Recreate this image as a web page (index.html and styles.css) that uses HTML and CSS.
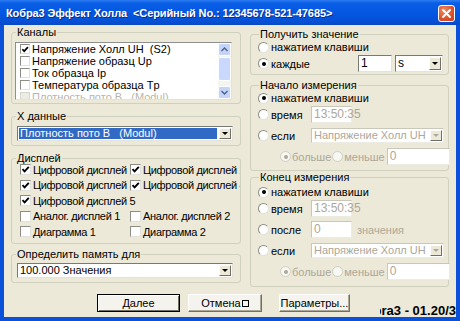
FILE: index.html
```html
<!DOCTYPE html>
<html lang="ru">
  <head>
    <meta charset="UTF-8" />
    <title>Кобра3 Эффект Холла</title>
    <link rel="stylesheet" href="styles.css">
  </head>
  <body>
    <div class="window">

      <div class="titlebar">
        <span class="title">Кобра3 Эффект Холла  &lt;Серийный No.: 12345678-521-47685&gt;</span>
        <span class="close">
          <svg width="9" height="9" viewBox="0 0 9 9"><path d="M1 1L8 8M8 1L1 8" stroke="#fff" stroke-width="1.8" stroke-linecap="round"/></svg>
        </span>
      </div>

      <div class="client">
        <div class="columns">

          <!-- left side -->
          <div class="col-left">
            <fieldset class="group channels">
              <legend>Каналы</legend>
              <div class="listbox">
                <div class="list-items">
                  <div class="list-row"><span class="cb small on"><svg viewBox="0 0 9 9"><path d="M1.5 4.2L3.6 6.4L7.8 1.8" /></svg></span>Напряжение Холл UH  (S2)</div>
                  <div class="list-row"><span class="cb small"></span>Напряжение образц Up</div>
                  <div class="list-row"><span class="cb small"></span>Ток образца Ip</div>
                  <div class="list-row"><span class="cb small"></span>Температура образца Tp</div>
                  <div class="list-row dim"><span class="cb small off"></span>Плотность пото В   (Modul)</div>
                </div>
                <div class="vscroll">
                  <span class="sbtn"><svg width="7" height="5" viewBox="0 0 7 5"><path d="M0.5 4L3.5 1L6.5 4" /></svg></span>
                  <span class="sthumb"></span>
                  <span class="strack"></span>
                  <span class="sbtn"><svg width="7" height="5" viewBox="0 0 7 5"><path d="M0.5 1L3.5 4L6.5 1" /></svg></span>
                </div>
              </div>
            </fieldset>

            <fieldset class="group xdata">
              <legend>Х данные</legend>
              <div class="combo wide">
                <span class="value selected">Плотность пото В   (Modul)</span>
                <span class="arrow"></span>
              </div>
            </fieldset>

            <fieldset class="group displays">
              <legend>Дисплей</legend>
              <div class="display-grid">
                <label class="opt"><span class="cb on"><svg viewBox="0 0 9 9"><path d="M1.5 4.2L3.6 6.4L7.8 1.8" /></svg></span>Цифровой дисплей 1</label>
                <label class="opt"><span class="cb on"><svg viewBox="0 0 9 9"><path d="M1.5 4.2L3.6 6.4L7.8 1.8" /></svg></span>Цифровой дисплей 2</label>
                <label class="opt"><span class="cb on"><svg viewBox="0 0 9 9"><path d="M1.5 4.2L3.6 6.4L7.8 1.8" /></svg></span>Цифровой дисплей 3</label>
                <label class="opt"><span class="cb on"><svg viewBox="0 0 9 9"><path d="M1.5 4.2L3.6 6.4L7.8 1.8" /></svg></span>Цифровой дисплей 4</label>
                <label class="opt"><span class="cb on"><svg viewBox="0 0 9 9"><path d="M1.5 4.2L3.6 6.4L7.8 1.8" /></svg></span>Цифровой дисплей 5</label>
                <span></span>
                <label class="opt"><span class="cb"></span>Аналог. дисплей 1</label>
                <label class="opt"><span class="cb"></span>Аналог. дисплей 2</label>
                <label class="opt"><span class="cb"></span>Диаграмма 1</label>
                <label class="opt"><span class="cb"></span>Диаграмма 2</label>
              </div>
            </fieldset>

            <fieldset class="group memory">
              <legend>Определить память для</legend>
              <div class="combo wide">
                <span class="value">100.000 Значения</span>
                <span class="arrow"></span>
              </div>
            </fieldset>
          </div>

          <!-- right side -->
          <div class="col-right">
            <fieldset class="group get-value">
              <legend>Получить значение</legend>
              <div class="opt-row first"><span class="rb"></span>нажатием клавиши</div>
              <div class="opt-row">
                <span class="rb on"></span><span class="opt-label">каждые</span>
                <span class="edit every">1</span>
                <span class="combo unit"><span class="value">s</span><span class="arrow"></span></span>
              </div>
            </fieldset>

            <fieldset class="group start">
              <legend>Начало измерения</legend>
              <div class="opt-row first"><span class="rb on"></span>нажатием клавиши</div>
              <div class="opt-row"><span class="rb"></span><span class="opt-label">время</span><span class="edit off short">13:50:35</span></div>
              <div class="opt-row gap"><span class="rb"></span><span class="opt-label">если</span>
                <span class="combo off long"><span class="value">Напряжение Холл UH</span><span class="arrow"></span></span>
              </div>
              <div class="opt-row gap cmp"><span class="rb on off"></span><span class="dim-text">больше</span><span class="rb off"></span><span class="dim-text">меньше</span><span class="edit off limit">0</span></div>
            </fieldset>

            <fieldset class="group stop">
              <legend>Конец измерения</legend>
              <div class="opt-row first"><span class="rb on"></span>нажатием клавиши</div>
              <div class="opt-row"><span class="rb"></span><span class="opt-label">время</span><span class="edit off short">13:50:35</span></div>
              <div class="opt-row gap"><span class="rb"></span><span class="opt-label">после</span><span class="edit off short">0</span><span class="dim-text unit-text">значения</span></div>
              <div class="opt-row gap"><span class="rb"></span><span class="opt-label">если</span>
                <span class="combo off long"><span class="value">Напряжение Холл UH</span><span class="arrow"></span></span>
              </div>
              <div class="opt-row gap cmp"><span class="rb on off"></span><span class="dim-text">больше</span><span class="rb off"></span><span class="dim-text">меньше</span><span class="edit off limit">0</span></div>
            </fieldset>
          </div>
        </div>

        <div class="footer">
          <button class="btn btn-default">Далее</button>
          <button class="btn btn-cancel">Отмена<span class="missing"></span></button>
          <button class="btn btn-params">Параметры...</button>
          <span class="version"><span>Cobra3 - 01.20/3</span></span>
        </div>
      </div>

    </div>
  </body>
</html>
```

FILE: styles.css
```css
* {
  box-sizing: border-box;
}

body {
  margin: 0;
  font-family: "Liberation Sans", Arial, sans-serif;
  font-size: 11px;
  color: #000;
}

.window {
  width: 460px;
  height: 321px;
  display: flex;
  flex-direction: column;
  overflow: hidden;
}

/* title bar */
.titlebar {
  height: 25px;
  flex: none;
  display: flex;
  align-items: center;
  justify-content: space-between;
  padding: 0 5px 0 6px;
  background: linear-gradient(#2f7df5 0%, #0a5fe6 12%, #0456e0 55%, #0550d6 85%, #0a49c4 100%);
}

.title {
  color: #fff;
  font-weight: bold;
  font-size: 11px;
  letter-spacing: -0.1px;
  white-space: pre;
  text-shadow: 1px 1px 0 #0a2f8a;
}

.close {
  width: 17px;
  height: 17px;
  margin-top: 2px;
  display: flex;
  align-items: center;
  justify-content: center;
  border: 1px solid #fff;
  border-radius: 3px;
  background: radial-gradient(circle at 35% 30%, #f08a66, #d9502a 60%, #c2401a);
}

/* client area */
.client {
  flex: 1;
  display: flex;
  flex-direction: column;
  background: #ece9d8;
  border: 4px solid #0a50d8;
  border-top: 0;
  padding-top: 2px;
}

.columns {
  display: flex;
  align-items: flex-start;
  padding: 0 7px;
  gap: 9px;
}

.col-left {
  width: 230px;
  display: flex;
  flex-direction: column;
}

.col-right {
  width: 199px;
  display: flex;
  flex-direction: column;
  margin-top: 2px;
}

.group {
  margin: 0;
  min-width: 0;
  border: 1px solid #d0d0bf;
  border-radius: 3px;
  padding: 0 8px 3px 3px;
}

.group legend {
  padding: 0 1px;
  margin-left: 1px;
  line-height: 11px;
}

/* Каналы */
.channels {
  padding-top: 4px;
}

.listbox {
  width: 217px;
  height: 58px;
  display: flex;
  background: #fff;
  border: 1px solid;
  border-color: #8e8f8f #e3e3db #e3e3db #8e8f8f;
}

.list-items {
  flex: 1;
  overflow: hidden;
  padding: 0 0 0 4px;
}

.list-row {
  height: 12px;
  display: flex;
  align-items: center;
  white-space: pre;
}

.list-row.dim {
  color: #b8b6aa;
}

.vscroll {
  width: 13px;
  display: flex;
  flex-direction: column;
  background: #f4f4f0;
}

.sbtn {
  height: 13px;
  display: flex;
  align-items: center;
  justify-content: center;
  background: #c5d5fa;
  border: 1px solid #fff;
  border-radius: 2px;
}

.sbtn path {
  fill: none;
  stroke: #4d6185;
  stroke-width: 1.4;
}

.sthumb {
  height: 24px;
  margin: 1px 0;
  background: #c9d8fc;
  border: 1px solid #fff;
  border-radius: 2px;
}

.strack {
  flex: 1;
}

/* check boxes and radios */
.cb {
  width: 11px;
  height: 11px;
  flex: none;
  margin-right: 2px;
  background: #fff;
  border: 1px solid;
  border-color: #8d8d86 #e2e2dc #e2e2dc #8d8d86;
  display: flex;
  align-items: center;
  justify-content: center;
}

.cb.small {
  width: 10px;
  height: 10px;
  margin-right: 2px;
}

.cb.off {
  background: #ecebe4;
  border-color: #d6d5cc;
}

.cb svg {
  width: 9px;
  height: 9px;
}

.cb path {
  fill: none;
  stroke: #000;
  stroke-width: 1.9;
}

.rb {
  width: 11px;
  height: 11px;
  flex: none;
  margin-right: 2px;
  border-radius: 50%;
  background: #fff;
  border: 1px solid;
  border-color: #8d8d86 #e2e2dc #e2e2dc #8d8d86;
  display: flex;
  align-items: center;
  justify-content: center;
}

.rb.on::after {
  content: "";
  width: 4px;
  height: 4px;
  border-radius: 50%;
  background: #000;
}

.rb.off {
  border-color: #d0cfc4;
  background: #f7f7f3;
}

.rb.on.off::after {
  background: #aca899;
}

/* edits and combos */
.edit {
  height: 17px;
  flex: none;
  background: #fff;
  border: 1px solid;
  border-color: #7a7a74 #e3e3db #e3e3db #7a7a74;
  padding-left: 2px;
  line-height: 15px;
  font-size: 12px;
}

.edit.off {
  color: #aca899;
  border-color: #c9c7ba #ecebe4 #ecebe4 #c9c7ba;
}

.combo {
  height: 15px;
  display: flex;
  background: #fff;
  border: 1px solid;
  border-color: #7a7a74 #e3e3db #e3e3db #7a7a74;
  padding: 1px;
}

.combo .value {
  flex: 1;
  padding-left: 1px;
  line-height: 11px;
  white-space: pre;
  overflow: hidden;
}

.combo .value.selected {
  background: #316ac5;
  color: #fff;
  margin-right: 2px;
}

.combo .arrow {
  width: 12px;
  flex: none;
  display: flex;
  align-items: center;
  justify-content: center;
  background: #ece9d8;
  border: 1px solid;
  border-color: #fff #716f64 #716f64 #fff;
}

.combo .arrow::after {
  content: "";
  border-top: 3px solid #000;
  border-left: 3px solid transparent;
  border-right: 3px solid transparent;
}

.combo.off {
  color: #aca899;
  border-color: #c9c7ba #ecebe4 #ecebe4 #c9c7ba;
}

.combo.off .arrow::after {
  border-top-color: #aca899;
}

.combo.wide {
  width: 216px;
  margin-left: 2px;
}

/* Х данные */
.xdata {
  margin-top: 7px;
  padding-top: 4px;
  padding-bottom: 4px;
}

/* Дисплей */
.displays {
  margin-top: 7px;
  overflow: hidden;
}

.display-grid {
  display: grid;
  grid-template-columns: 110px 110px;
  grid-auto-rows: 15.5px;
  margin-top: -2px;
  padding-left: 5px;
  letter-spacing: -0.35px;
}

.opt {
  display: flex;
  align-items: center;
  white-space: nowrap;
}

/* Определить память для */
.memory {
  margin-top: 5px;
  padding-top: 3px;
  padding-bottom: 4px;
}

/* right side rows */
.col-right .group {
  padding: 0 4px 2px 7px;
}

.opt-row {
  height: 17px;
  display: flex;
  align-items: center;
  white-space: nowrap;
}

.opt-row.first {
  height: 14px;
}

.opt-row.gap {
  margin-top: 4px;
}

.opt-row + .opt-row:not(.gap) {
  margin-top: 1px;
}

.opt-label {
  width: 40px;
}

.edit.every {
  width: 34px;
  margin-left: 47px;
}

.combo.unit {
  width: 48px;
  height: 17px;
  margin-left: 3px;
  font-size: 12px;
}

.combo.unit .value {
  line-height: 13px;
}

.edit.short {
  width: 41px;
}

.combo.long {
  width: 133px;
}

.cmp {
  padding-left: 22px;
}

.cmp .rb {
  margin-right: 1px;
}

.dim-text {
  color: #aca899;
}

.cmp .dim-text {
  margin-right: 1px;
}

.edit.limit {
  width: 63px;
  margin-left: 1px;
}

.unit-text {
  margin-left: 5px;
}

.start {
  margin-top: 5px;
  padding-bottom: 5px !important;
}

.stop {
  margin-top: 1px;
  padding-top: 2px !important;
  padding-bottom: 6px !important;
}

/* bottom buttons */
.footer {
  flex: 1;
  display: flex;
  align-items: flex-start;
  padding: 7px 0 0 93px;
}

.btn {
  height: 18px;
  padding: 0;
  font-family: "Liberation Sans", Arial, sans-serif;
  font-size: 11px;
  color: #000;
  background: #f4f3ee;
  border: 1px solid;
  border-color: #fff #716f64 #716f64 #fff;
  box-shadow: inset -1px -1px #aca899;
  display: flex;
  align-items: center;
  justify-content: center;
}

.btn-default {
  width: 83px;
  border: 1px solid #000;
  box-shadow: inset 1px 1px #fff, inset -1px -1px #716f64;
}

.btn-cancel {
  width: 74px;
  margin-left: 8px;
}

.btn-params {
  width: 71px;
  margin-left: 17px;
}

.missing {
  width: 7px;
  height: 7px;
  margin-left: 1px;
  border: 1px solid #000;
}

.version {
  width: 76px;
  margin-left: 30px;
  align-self: flex-end;
  display: flex;
  justify-content: flex-end;
  overflow: hidden;
  font-weight: bold;
  font-size: 13px;
  line-height: 13px;
  white-space: nowrap;
}
```
